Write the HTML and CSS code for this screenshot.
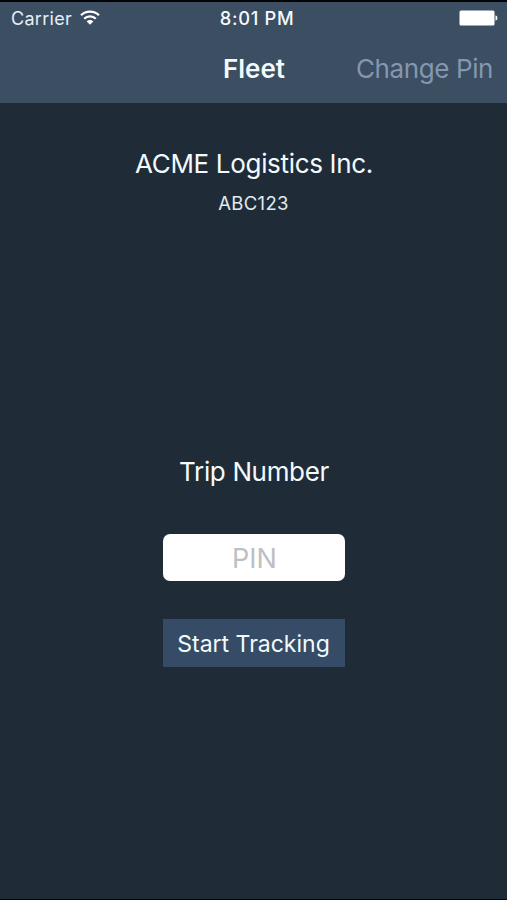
FILE: index.html
```html
<!DOCTYPE html>
<html lang="en">
<head>
<meta charset="utf-8">
<title>Fleet</title>
<link rel="stylesheet" href="styles.css">
</head>
<body>
<div class="app">
  <header class="top">
    <div class="status">
      <div class="carrier"><span class="carrier-name">Carrier</span>
        <svg class="wifi" viewBox="0 0 20 15" width="20" height="15"><g fill="none" stroke="#fff" stroke-width="2.3"><path d="M1 5.2a12.9 12.9 0 0 1 18 0"/><path d="M4.2 8.7a8.2 8.2 0 0 1 11.6 0"/></g><path fill="#fff" d="M10 14.8l-3.3-3.4a4.7 4.7 0 0 1 6.6 0z"/></svg>
      </div>
      <time class="clock">8:01 PM</time>
      <svg class="battery" viewBox="0 0 39 16" width="39" height="16"><rect x="0.5" y="0.5" width="35" height="15" rx="1.5" fill="#fff"/><path d="M36.5 5.2q2 .8 2 2.8t-2 2.8z" fill="#fff"/></svg>
    </div>
    <nav class="nav">
      <h1 class="title">Fleet</h1>
      <a class="change">Change Pin</a>
    </nav>
  </header>
  <main class="content">
    <h2 class="company">ACME Logistics Inc.</h2>
    <p class="code">ABC123</p>
    <label class="trip" for="pin">Trip Number</label>
    <input class="pin" id="pin" placeholder="PIN">
    <button class="start">Start Tracking</button>
  </main>
</div>
</body>
</html>
```
FILE: styles.css
```css
* { box-sizing: border-box; margin: 0; padding: 0; }
body { background: #1f2c38; font-family: Inter, sans-serif; color: #f3fafd; }
.app { height: 900px; display: flex; flex-direction: column; border-top: 2px solid #020305; border-bottom: 1px solid #020305; overflow: hidden; }
.top { height: 101px; background: #3b4e62; }
.status { height: 32px; display: grid; grid-template-columns: 1fr auto 1fr; align-items: center; padding: 0 9px 0 11px; }
.carrier { display: flex; align-items: center; gap: 8px; font-size: 18px; letter-spacing: 0.3px; color: #e6eff7; }
.wifi { margin-top: -2px; }
.clock { margin-left: 5px; font-size: 18.3px; font-weight: 500; letter-spacing: 0.7px; }
.battery { justify-self: end; }
.nav { height: 68px; display: grid; grid-template-columns: 1fr auto 1fr; align-items: center; padding: 0 14px 0 15px; }
.title { grid-column: 2; padding-top: 2px; font-size: 26px; font-weight: 600; line-height: 32px; }
.change { justify-self: end; font-size: 26px; letter-spacing: -0.4px; color: #8596b0; white-space: nowrap; }
.content { display: flex; flex-direction: column; align-items: center; }
.company { margin: 44px 0 0 1px; font-size: 26px; line-height: 34px; font-weight: 400; letter-spacing: -0.32px; }
.code { margin-top: 9px; font-size: 18.5px; line-height: 26px; letter-spacing: 0.35px; color: #e0ebf0; }
.trip { margin: 238px 0 0 1px; font-size: 26px; line-height: 36px; letter-spacing: -0.35px; }
.pin { width: 182px; height: 47px; margin-top: 44px; padding: 1px 0 0 2px; border: 0; border-radius: 7px; background: #fff; text-align: center; font: 27px Inter, sans-serif; }
.pin::placeholder { color: #bfbfc3; opacity: 1; }
.start { width: 182px; height: 48px; margin-top: 38px; padding-top: 2px; border: 0; background: #364c66; color: #f3fafd; font: 23px Inter, sans-serif; white-space: nowrap; }
```
